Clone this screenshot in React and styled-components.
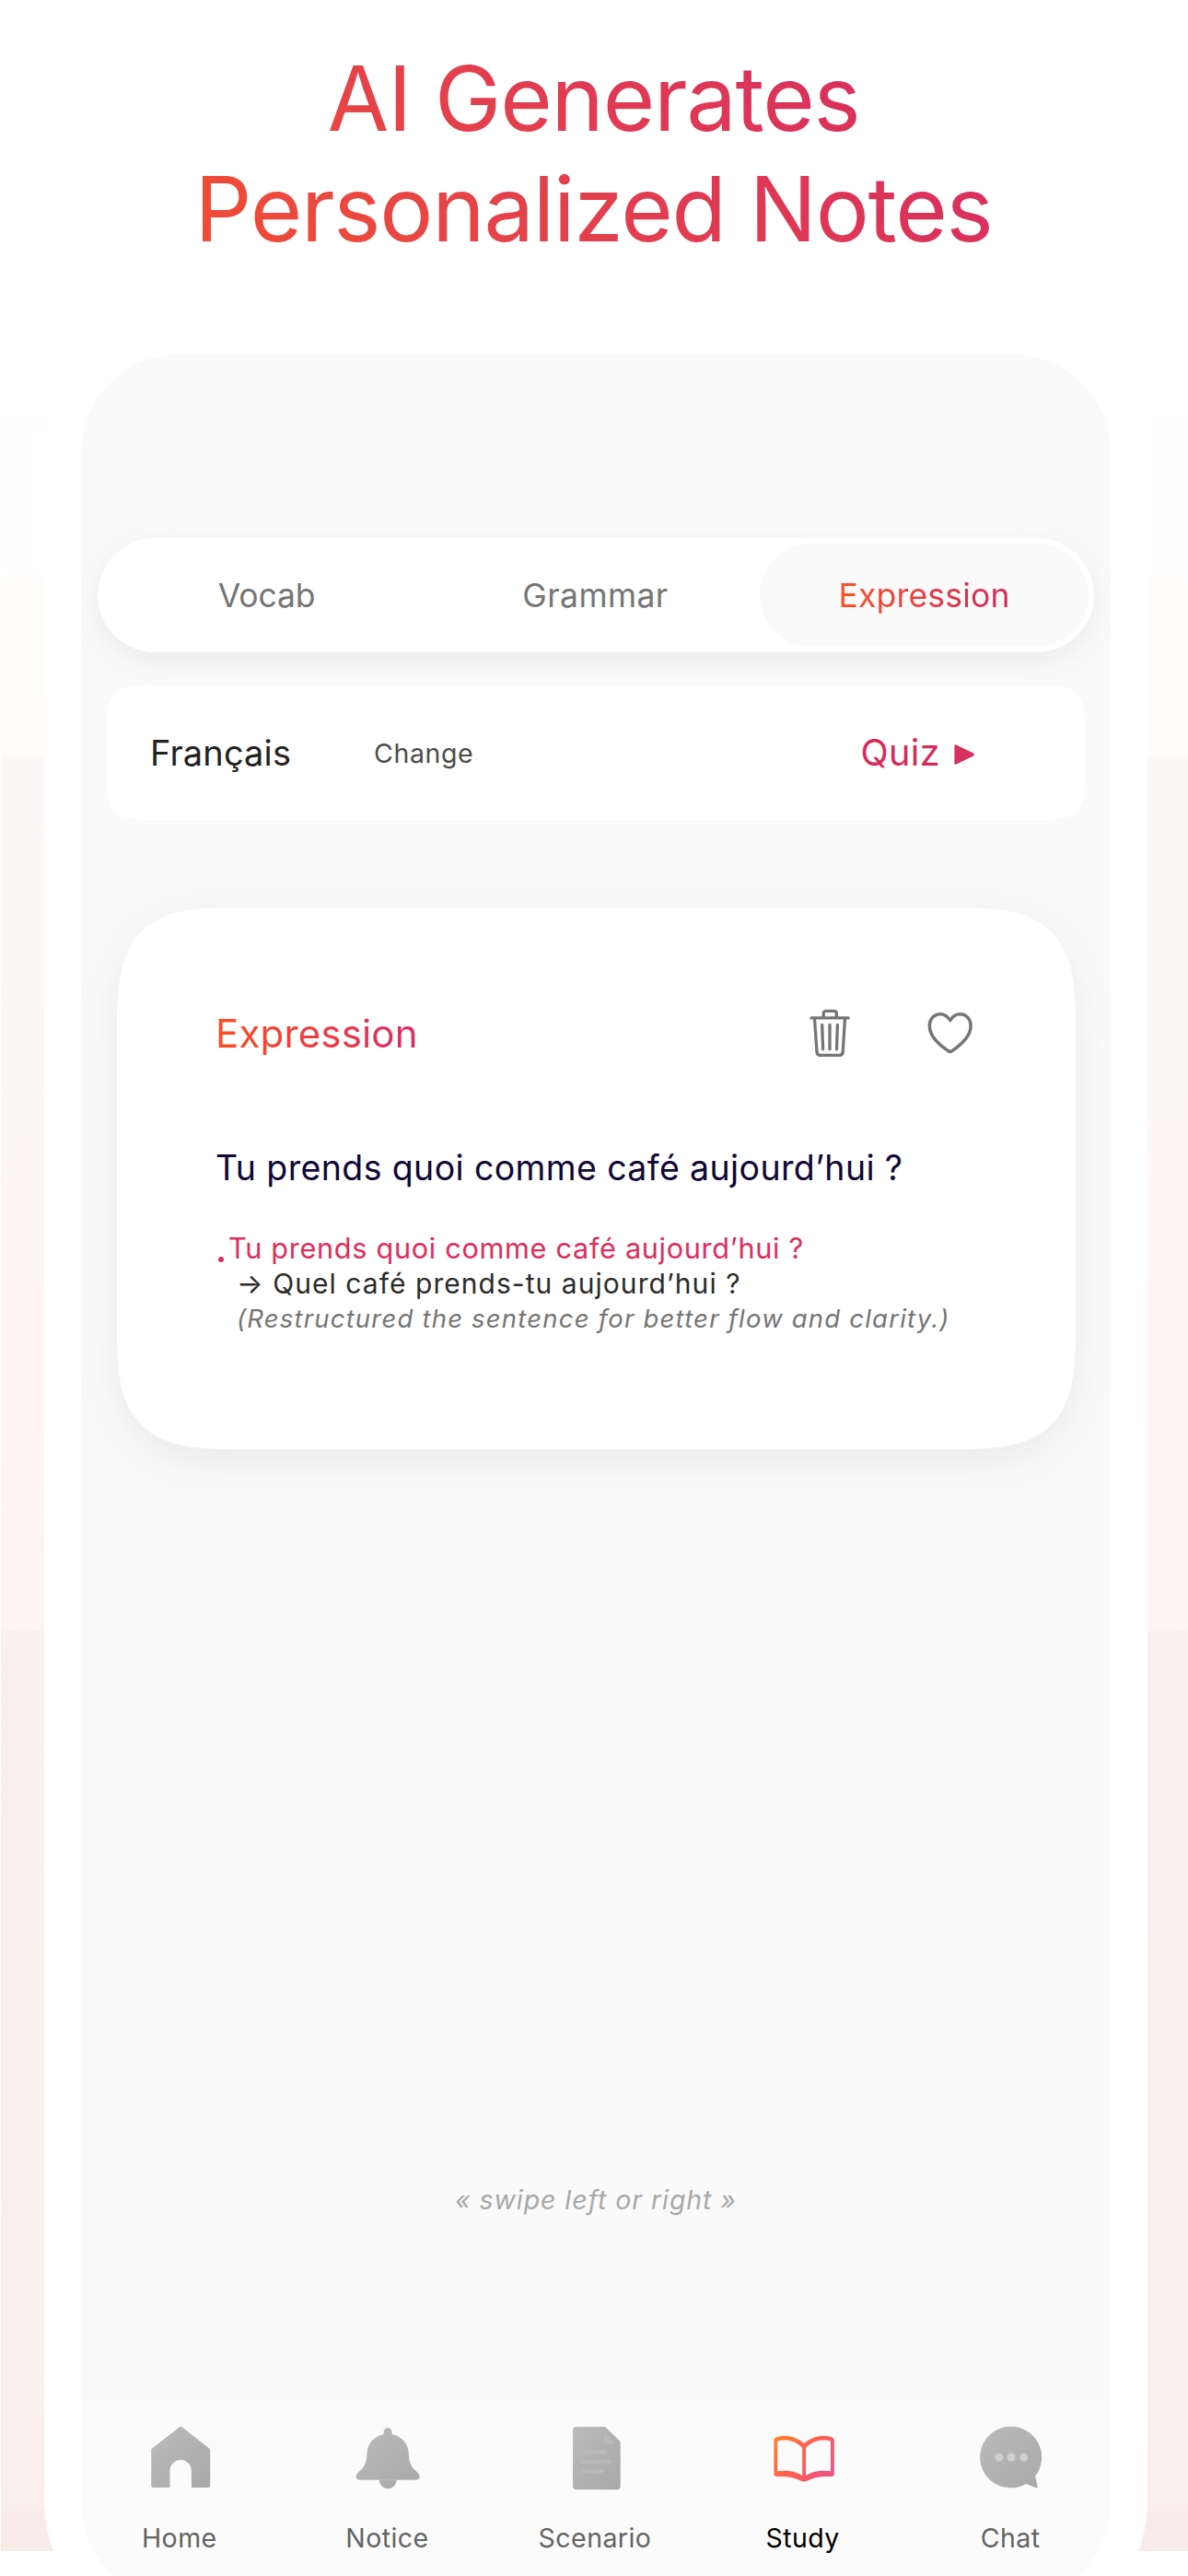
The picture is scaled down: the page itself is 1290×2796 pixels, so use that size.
import React from 'react';
import styled, { createGlobalStyle } from 'styled-components';

const GlobalStyle = createGlobalStyle`
  * { box-sizing: border-box; }
  body {
    margin: 0;
    background: #fff;
    font-family: Inter, Roboto, "Liberation Sans", sans-serif;
    font-weight: 400;
  }
`;

const Page = styled.div`
  display: flex;
  flex-direction: column;
  width: 1290px;
  height: 2796px;
  overflow: hidden;
  background: #fff
    linear-gradient(
      #ffffff 430px,
      #fffdfd 450px,
      #fffdfd 620px,
      #fefdfb 640px,
      #fffcf9 819px,
      #fcf8f7 821px,
      #fcf8f6 1020px,
      #fcf7f4 1389px,
      #fff4f2 1391px,
      #fef4f1 1769px,
      #f9f1ef 1771px,
      #f9f0ed 2050px,
      #f9f0eb 2330px,
      #f9eeea 2724px,
      #f9ebe8 2726px
    )
    1px 0 / 1289px 2769px no-repeat;
`;

const Header = styled.header`
  display: flex;
  justify-content: center;
  align-items: flex-start;
  flex: none;
  height: 345px;
  padding: 47px 1px 0 0;
`;

const Title = styled.h1`
  margin: 0;
  font-size: 97px;
  font-weight: 400;
  line-height: 120px;
  letter-spacing: -1.21px;
  text-align: center;
  color: transparent;
  background: linear-gradient(45deg, #f04c34 0%, #eb4840 20%, #e4424a 36%, #df3955 60%, #da305c 82%, #d92d5f 100%);
  background-clip: text;
  -webkit-background-clip: text;
`;

const Frame = styled.main`
  flex: none;
  width: 1198px;
  height: 2516px;
  margin-left: 48px;
  padding: 40px;
  border-radius: 145px;
  background: #fff;
`;

const Screen = styled.div`
  display: flex;
  flex-direction: column;
  height: 100%;
  padding-top: 199px;
  border-radius: 105px;
  background: #fafafa;
  overflow: hidden;
`;

const TabBar = styled.nav`
  display: grid;
  grid-template-columns: repeat(3, 1fr);
  flex: none;
  height: 124px;
  margin: 0 18px;
  padding: 6px 6px 6px 5px;
  border-radius: 62px;
  background: #fff;
  box-shadow: 0 9px 32px rgba(0, 0, 0, 0.065);
`;

const Tab = styled.div`
  display: flex;
  align-items: center;
  justify-content: center;
  border-radius: 56px;
  background: ${(p) => (p.$active ? '#fafafa' : 'transparent')};
  color: #757575;
  font-size: 35.5px;
  letter-spacing: ${(p) => p.$spacing}px;
`;

const GradientText = styled.span`
  color: transparent;
  background: linear-gradient(98deg, ${(p) => p.$from}, ${(p) => p.$to});
  background-clip: text;
  -webkit-background-clip: text;
`;

const LanguageRow = styled.section`
  display: flex;
  align-items: center;
  flex: none;
  height: 146px;
  margin: 36px 28px 0;
  padding: 0 120px 1px 47px;
  border-radius: 46px;
  corner-shape: superellipse(1.69);
  background: #fff;
  z-index: 1;
`;

const Language = styled.span`
  width: 243px;
  font-size: 38px;
  letter-spacing: 0.12px;
  color: #222;
`;

const ChangeLink = styled.span`
  padding-top: 2px;
  font-size: 28.5px;
  letter-spacing: 0.62px;
  color: #4c4c4c;
`;

const QuizLink = styled.span`
  display: flex;
  align-items: center;
  gap: 15px;
  margin-left: auto;
  font-size: 39.5px;
  letter-spacing: 0.39px;
  color: #d82a58;

  svg {
    margin-top: 5px;
  }
`;

const NoteCard = styled.article`
  flex: none;
  height: 588px;
  margin: 95px 38px 0 39px;
  padding: 110px 110px 0 107px;
  border-radius: 137px;
  corner-shape: superellipse(1.69);
  background: #fff;
  box-shadow: 0 13px 48px rgba(0, 0, 0, 0.07);
`;

const CardHead = styled.div`
  display: flex;
  align-items: center;
  height: 52px;
  font-size: 42px;
  letter-spacing: 0.17px;
`;

const CardActions = styled.div`
  display: flex;
  align-items: center;
  gap: 83px;
  margin-left: auto;
`;

const Sentence = styled.h2`
  margin: 96px 0 0;
  font-size: 37.5px;
  font-weight: 400;
  line-height: 50px;
  letter-spacing: 0.38px;
  white-space: nowrap;
  color: #100735;
`;

const Correction = styled.div`
  display: grid;
  grid-template-columns: 14px auto;
  margin-top: 43px;
  line-height: 38px;
  white-space: nowrap;
`;

const Bullet = styled.span`
  width: 6px;
  height: 6px;
  margin: 28px 0 0 3px;
  border-radius: 50%;
  background: #dc2e5c;
`;

const Original = styled.span`
  font-size: 30.7px;
  letter-spacing: 0.67px;
  color: #dc2e5c;
`;

const Improved = styled.span`
  grid-column: 2;
  padding-left: 9px;
  font-size: 30px;
  letter-spacing: 1.05px;
  color: #2b2b2b;
`;

const Reason = styled.em`
  grid-column: 2;
  padding-left: 9px;
  font-size: 27.5px;
  letter-spacing: 1.2px;
  color: #757575;
`;

const SwipeHint = styled.p`
  margin: 795px 0 0;
  font-size: 28.5px;
  font-style: italic;
  line-height: 40px;
  letter-spacing: 0.93px;
  text-align: center;
  color: #a8a8a8;
`;

const BottomNav = styled.nav`
  display: flex;
  justify-content: center;
  flex: 1;
  margin-top: 197px;
  padding-top: 28px;
  background: #fbfbfb;
`;

const NavItem = styled.div`
  display: flex;
  flex: 0 0 225.6px;
  flex-direction: column;
  align-items: center;
  gap: 34px;
`;

const NavLabel = styled.span`
  margin-right: 2px;
  font-size: 28.5px;
  line-height: 36px;
  letter-spacing: 0.45px;
  color: ${(p) => (p.$active ? '#000' : '#636363')};
`;

const Icon = ({ width = 70, height = 70, children }) => (
  <svg width={width} height={height} viewBox={`0 0 ${width} ${height}`} fill="none" aria-hidden="true">
    {children}
  </svg>
);

const GreyGradient = ({ id }) => (
  <defs>
    <linearGradient id={id} x1="0" y1="0" x2="1" y2="1">
      <stop offset="0" stopColor="#bbb" />
      <stop offset="1" stopColor="#a8a8a8" />
    </linearGradient>
  </defs>
);

const HomeIcon = () => (
  <Icon>
    <GreyGradient id="home" />
    <path
      fill="url(#home)"
      d="M34 1.2Q35.2 .3 36.4 1.2L66.2 24.4Q67.2 25.2 67.2 26.6V65Q67.2 67 65.2 67H46.9V48.7A11.7 11.7 0 0 0 23.5 48.7V67H5.2Q3.2 67 3.2 65V26.6Q3.2 25.2 4.2 24.4Z"
    />
  </Icon>
);

const BellIcon = () => (
  <Icon>
    <GreyGradient id="bell" />
    <path
      fill="url(#bell)"
      d="M30.6 9.2V6.8a4.5 4.5 0 0 1 9 0V9.2C50.5 11.3 57.6 19.5 57.8 30C57.9 38.5 60 43.4 64 47.6L68.2 51.6C71.2 54.8 69.4 58.7 66 58.7H44.7A9.5 9.6 0 0 1 25.7 58.7H4.3C.9 58.7-.9 54.8 2.1 51.6L6.2 47.6C10.2 43.4 12.3 38.5 12.5 30C12.7 19.5 19.8 11.3 30.6 9.2Z"
    />
    <path stroke="#bdbdbd" strokeWidth=".8" d="M26 58.7H44.5" />
  </Icon>
);

const DocumentIcon = () => (
  <Icon>
    <GreyGradient id="document" />
    <path
      fill="url(#document)"
      d="M14 1H43.5Q45.3 1 46.5 2.2L60.5 16Q61.7 17.2 61.7 19V65.3Q61.7 69.3 57.7 69.3H14Q10 69.3 10 65.3V5Q10 1 14 1Z"
    />
    <path fill="#bababa" d="M44 7.5V17.5Q44 19.5 46 19.5H56Z" />
    <path stroke="#b9b9b9" strokeWidth="4.4" strokeLinecap="round" d="M20.5 28.7H44.5M20.5 39H50M20.5 49H42" />
  </Icon>
);

const BookIcon = () => (
  <Icon>
    <defs>
      <linearGradient id="book" x1="3" y1="12" x2="67" y2="60" gradientUnits="userSpaceOnUse">
        <stop offset="0" stopColor="#ff7f2a" />
        <stop offset=".5" stopColor="#ff5c52" />
        <stop offset="1" stopColor="#e8508c" />
      </linearGradient>
    </defs>
    <path
      fill="url(#book)"
      fillRule="evenodd"
      d="M2.4 16.5C2.4 14 3.5 12.8 6 12C15 9.5 27 11.5 35.1 19.3C43.2 11.5 55.2 9.5 64.2 12C66.7 12.8 67.8 14 67.8 16.5V52C67.8 54 66.8 55 64.8 55C55 54.6 48 55 39 59.4C36 60.8 34.2 60.8 31.2 59.4C22 55 15 54.6 5.4 55C3.4 55 2.4 54 2.4 52ZM6.2 16.6V49.3C16 48 26 49 33.2 54.2V24C26 15.8 15 14 6.2 16.6ZM64 16.6C55.2 14 44.2 15.8 37 24V54.2C44.2 49 54.2 48 64 49.3Z"
    />
  </Icon>
);

const ChatIcon = () => (
  <Icon>
    <GreyGradient id="chat" />
    <path
      fill="url(#chat)"
      d="M35.1.7A33.3 33.3 0 1 0 51 62.9L61.8 67.2Q64 67.6 63.5 65.4L61 54.6A33.3 33.3 0 0 0 35.1.7Z"
    />
    <g fill="#cfcfcf">
      <circle cx="21.8" cy="34" r="4.5" />
      <circle cx="35.2" cy="34" r="4.5" />
      <circle cx="48.7" cy="34" r="4.5" />
    </g>
  </Icon>
);

const TrashIcon = () => (
  <Icon width={44} height={52}>
    <g stroke="#757575" strokeWidth="3.3" strokeLinecap="round" strokeLinejoin="round">
      <path d="M1.9 9.9H42.2M15.2 9.5V5Q15.2 2.4 17.8 2.4H26.7Q29.3 2.4 29.3 5V9.5" />
      <path d="M5.5 10.5L8 47Q8.3 50.3 11.5 50.3H32.7Q35.9 50.3 36.2 47L38.5 10.5" />
      <path d="M13.7 17.5L14.6 43.8M22 17.5V43.8M30.4 17.5L29.5 43.8" />
    </g>
  </Icon>
);

const HeartIcon = () => (
  <Icon width={52} height={48}>
    <path
      stroke="#757575"
      strokeWidth="3.5"
      strokeLinejoin="round"
      d="M25.7 10.6C23 6.2 19.2 3.8 14.9 3.8C8 3.8 3.3 9.3 3.3 16.5C3.3 27 13 36.5 23.6 43.6Q25.7 45.2 27.8 43.6C38.4 36.5 48.1 27 48.1 16.5C48.1 9.3 43.4 3.8 36.5 3.8C32.2 3.8 28.4 6.2 25.7 10.6Z"
    />
  </Icon>
);

const PlayIcon = () => (
  <Icon width={22} height={22}>
    <path
      fill="#d6305c"
      stroke="#d6305c"
      strokeWidth="2"
      strokeLinejoin="round"
      d="M1.4 1.2L20.6 10.4V11.6L1.4 20.8Z"
    />
  </Icon>
);

const tabs = [
  { name: 'Vocab', spacing: -0.13 },
  { name: 'Grammar', spacing: 0.43 },
  { name: 'Expression', spacing: 0.19, active: true },
];

const navItems = [
  { name: 'Home', Glyph: HomeIcon },
  { name: 'Notice', Glyph: BellIcon },
  { name: 'Scenario', Glyph: DocumentIcon },
  { name: 'Study', Glyph: BookIcon, active: true },
  { name: 'Chat', Glyph: ChatIcon },
];

export default function App() {
  return (
    <Page>
      <GlobalStyle />
      <Header>
        <Title>
          AI Generates
          <br />
          Personalized Notes
        </Title>
      </Header>
      <Frame>
        <Screen>
          <TabBar>
            {tabs.map(({ name, spacing, active }) => (
              <Tab key={name} $active={active} $spacing={spacing}>
                {active ? (
                  <GradientText $from="#fa5424" $to="#d6245e">
                    {name}
                  </GradientText>
                ) : (
                  name
                )}
              </Tab>
            ))}
          </TabBar>
          <LanguageRow>
            <Language>Français</Language>
            <ChangeLink>Change</ChangeLink>
            <QuizLink>
              Quiz
              <PlayIcon />
            </QuizLink>
          </LanguageRow>
          <NoteCard>
            <CardHead>
              <GradientText $from="#ff4d1c" $to="#d92b66">
                Expression
              </GradientText>
              <CardActions>
                <TrashIcon />
                <HeartIcon />
              </CardActions>
            </CardHead>
            <Sentence>Tu prends quoi comme café aujourd’hui ?</Sentence>
            <Correction>
              <Bullet />
              <Original>Tu prends quoi comme café aujourd’hui ?</Original>
              <Improved>→ Quel café prends-tu aujourd’hui ?</Improved>
              <Reason>(Restructured the sentence for better flow and clarity.)</Reason>
            </Correction>
          </NoteCard>
          <SwipeHint>« swipe left or right »</SwipeHint>
          <BottomNav>
            {navItems.map(({ name, Glyph, active }) => (
              <NavItem key={name}>
                <Glyph />
                <NavLabel $active={active}>{name}</NavLabel>
              </NavItem>
            ))}
          </BottomNav>
        </Screen>
      </Frame>
    </Page>
  );
}
